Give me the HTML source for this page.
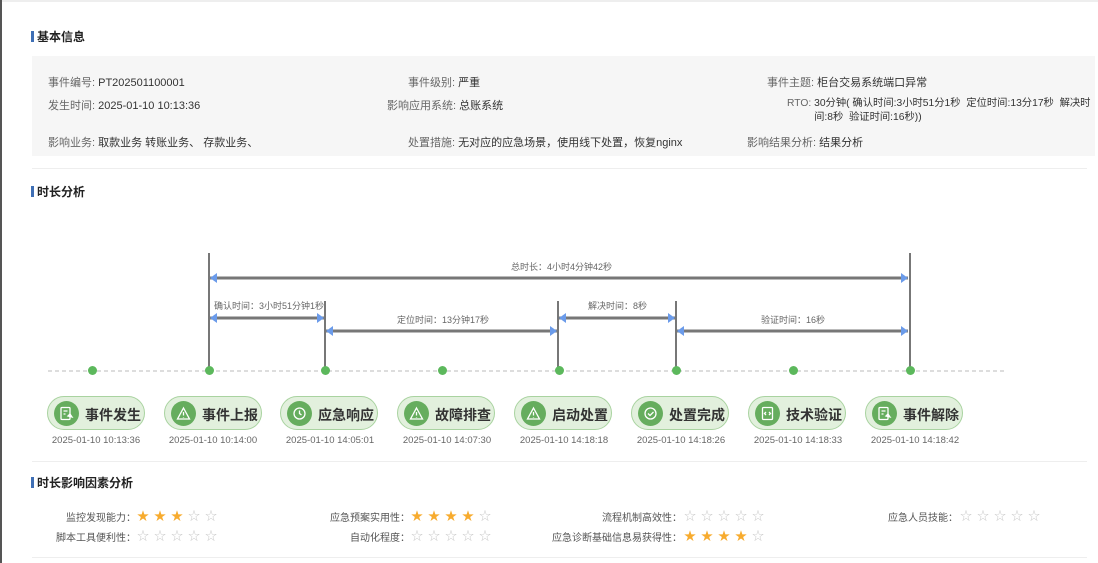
<!DOCTYPE html><html><head><meta charset="utf-8"><style>
*{margin:0;padding:0;box-sizing:border-box}
body{width:1098px;height:563px;background:#fff;font-family:"Liberation Sans","Noto Sans CJK SC",sans-serif;position:relative;overflow:hidden;color:#333}
.a{position:absolute;white-space:nowrap}
.t{font-size:12px;font-weight:bold;color:#222}
.bar{position:absolute;width:3px;height:11px;background:#3f6fb5}
.f{font-size:11px;color:#333}
.f span{color:#666}
.lab{font-size:9px;color:#666}
.vl{position:absolute;width:2px;background:#777}
.dot{position:absolute;width:9px;height:9px;border-radius:50%;background:#5cb85c;top:366px}
.pill{position:absolute;top:396px;width:98px;height:34px;border-radius:17px;background:#e2f0dd;border:1px solid #a9d3a0}
.pill i{position:absolute;left:6px;top:4px;width:25px;height:25px;border-radius:50%;background:#66ad5e}
.pill i svg{position:absolute;left:5px;top:5px}
.pill b{position:absolute;left:37px;top:8px;font-size:14px;color:#333}
.dt{position:absolute;top:435px;font-size:9.5px;color:#666;width:110px;text-align:center}
.sl{font-size:10px;color:#555;text-align:right}
.st{font-size:12px;letter-spacing:5px;color:#c8c8c8}
.st em{font-style:normal;color:#f7ab2e}
</style></head><body>
<div class="a" style="left:0;top:0;width:2px;height:563px;background:#555"></div>
<div class="a" style="left:2px;top:0;width:1096px;height:2px;background:#eee"></div>

<div class="bar" style="left:31px;top:31px"></div><div class="a t" style="left:37px;top:28px">基本信息</div>
<div class="a" style="left:32px;top:56px;width:1063px;height:100px;background:#f6f6f6"></div>
<div class="a f" style="left:48px;top:74px"><span>事件编号: </span>PT202501100001</div>
<div class="a f" style="left:48px;top:97px"><span>发生时间: </span>2025-01-10 10:13:36</div>
<div class="a f" style="left:48px;top:134px"><span>影响业务: </span>取款业务 转账业务、 存款业务、</div>
<div class="a f" style="left:408px;top:74px"><span>事件级别: </span>严重</div>
<div class="a f" style="left:387px;top:97px"><span>影响应用系统: </span>总账系统</div>
<div class="a f" style="left:408px;top:134px"><span>处置措施: </span>无对应的应急场景，使用线下处置，恢复nginx</div>
<div class="a f" style="left:767px;top:74px"><span>事件主题: </span>柜台交易系统端口异常</div>
<div class="a f" style="left:787px;top:97px;line-height:14px;font-size:10.3px"><span>RTO: </span>30分钟( 确认时间:3小时51分1秒 &nbsp;定位时间:13分17秒 &nbsp;解决时<br><span style="visibility:hidden">RTO: </span>间:8秒 &nbsp;验证时间:16秒))</div>
<div class="a f" style="left:747px;top:134px"><span>影响结果分析: </span>结果分析</div>
<div class="a" style="left:32px;top:168px;width:1055px;height:1px;background:#eee"></div>

<div class="bar" style="left:31px;top:186px"></div><div class="a t" style="left:37px;top:183px">时长分析</div>

<div class="vl" style="left:208px;top:253px;height:117px"></div>
<div class="vl" style="left:324px;top:301px;height:69px"></div>
<div class="vl" style="left:557px;top:301px;height:69px"></div>
<div class="vl" style="left:675px;top:301px;height:69px"></div>
<div class="vl" style="left:909px;top:253px;height:117px"></div>
<svg class="a" style="left:0;top:0" width="1098" height="400">
<g fill="#6b9bea">
<line x1="210" y1="278" x2="908" y2="278" stroke="#777" stroke-width="3"/>
<polygon points="210,278 217,273 217,283"/><polygon points="908,278 901,273 901,283"/>
<line x1="210" y1="318" x2="324" y2="318" stroke="#777" stroke-width="3"/>
<polygon points="210,318 217,313 217,323"/><polygon points="324,318 317,313 317,323"/>
<line x1="326" y1="331" x2="557" y2="331" stroke="#777" stroke-width="3"/>
<polygon points="326,331 333,326 333,336"/><polygon points="557,331 550,326 550,336"/>
<line x1="559" y1="318" x2="675" y2="318" stroke="#777" stroke-width="3"/>
<polygon points="559,318 566,313 566,323"/><polygon points="675,318 668,313 668,323"/>
<line x1="677" y1="331" x2="908" y2="331" stroke="#777" stroke-width="3"/>
<polygon points="677,331 684,326 684,336"/><polygon points="908,331 901,326 901,336"/>
</g>
<line x1="48" y1="371" x2="1005" y2="371" stroke="#bbb" stroke-dasharray="4,3"/>
</svg>
<div class="a lab" style="left:511px;top:260px">总时长：4小时4分钟42秒</div>
<div class="a lab" style="left:214px;top:299px">确认时间：3小时51分钟1秒</div>
<div class="a lab" style="left:397px;top:313px">定位时间：13分钟17秒</div>
<div class="a lab" style="left:588px;top:299px">解决时间：8秒</div>
<div class="a lab" style="left:761px;top:313px">验证时间：16秒</div>

<div class="dot" style="left:88px"></div><div class="dot" style="left:205px"></div><div class="dot" style="left:321px"></div><div class="dot" style="left:438px"></div><div class="dot" style="left:555px"></div><div class="dot" style="left:672px"></div><div class="dot" style="left:789px"></div><div class="dot" style="left:906px"></div>

<div class="pill" style="left:47px"><i><svg width="15" height="15" viewBox="0 0 15 15" fill="none" stroke="#fff" stroke-width="1.3"><rect x="2" y="1.5" width="9" height="12" rx="1"/><path d="M4.5 5h4M4.5 8h2"/><path d="M9 10l2-2 2 3z"/></svg></i><b>事件发生</b></div>
<div class="pill" style="left:164px"><i><svg width="15" height="15" viewBox="0 0 15 15" fill="none" stroke="#fff" stroke-width="1.3"><path d="M7.5 2L13.5 13H1.5z"/><path d="M7.5 6v3.5M7.5 11v.5"/></svg></i><b>事件上报</b></div>
<div class="pill" style="left:280px"><i><svg width="15" height="15" viewBox="0 0 15 15" fill="none" stroke="#fff" stroke-width="1.3"><circle cx="7.5" cy="7.5" r="5.5"/><path d="M7.5 4.5v3l2 1.5"/></svg></i><b>应急响应</b></div>
<div class="pill" style="left:397px"><i><svg width="15" height="15" viewBox="0 0 15 15" fill="none" stroke="#fff" stroke-width="1.3"><path d="M7.5 2L13.5 13H1.5z"/><path d="M7.5 6v3.5M7.5 11v.5"/></svg></i><b>故障排查</b></div>
<div class="pill" style="left:514px"><i><svg width="15" height="15" viewBox="0 0 15 15" fill="none" stroke="#fff" stroke-width="1.3"><path d="M7.5 2L13.5 13H1.5z"/><path d="M7.5 6v3.5M7.5 11v.5"/></svg></i><b>启动处置</b></div>
<div class="pill" style="left:631px"><i><svg width="15" height="15" viewBox="0 0 15 15" fill="none" stroke="#fff" stroke-width="1.3"><circle cx="7.5" cy="7.5" r="5.5"/><path d="M5 7.5l2 2 3.5-3.5"/></svg></i><b>处置完成</b></div>
<div class="pill" style="left:748px"><i><svg width="15" height="15" viewBox="0 0 15 15" fill="none" stroke="#fff" stroke-width="1.3"><rect x="2.5" y="1.5" width="10" height="12" rx="1"/><path d="M6 6l-1.5 1.5L6 9M9 6l1.5 1.5L9 9"/></svg></i><b>技术验证</b></div>
<div class="pill" style="left:865px"><i><svg width="15" height="15" viewBox="0 0 15 15" fill="none" stroke="#fff" stroke-width="1.3"><rect x="2" y="1.5" width="9" height="12" rx="1"/><path d="M4.5 5h4M4.5 8h2"/><path d="M9 10l2-2 2 3z"/></svg></i><b>事件解除</b></div>

<div class="dt" style="left:41px">2025-01-10 10:13:36</div>
<div class="dt" style="left:158px">2025-01-10 10:14:00</div>
<div class="dt" style="left:275px">2025-01-10 14:05:01</div>
<div class="dt" style="left:392px">2025-01-10 14:07:30</div>
<div class="dt" style="left:509px">2025-01-10 14:18:18</div>
<div class="dt" style="left:626px">2025-01-10 14:18:26</div>
<div class="dt" style="left:743px">2025-01-10 14:18:33</div>
<div class="dt" style="left:860px">2025-01-10 14:18:42</div>

<div class="a" style="left:32px;top:461px;width:1055px;height:1px;background:#eee"></div>
<div class="bar" style="left:31px;top:477px"></div><div class="a t" style="left:37px;top:474px">时长影响因素分析</div>

<div class="a sl" style="left:20px;top:509px;width:116px">监控发现能力：</div><div class="a st" style="left:137px;top:507px"><em>★★★</em>☆☆</div>
<div class="a sl" style="left:20px;top:529px;width:116px">脚本工具便利性：</div><div class="a st" style="left:137px;top:527px">☆☆☆☆☆</div>
<div class="a sl" style="left:290px;top:509px;width:120px">应急预案实用性：</div><div class="a st" style="left:411px;top:507px"><em>★★★★</em>☆</div>
<div class="a sl" style="left:290px;top:529px;width:120px">自动化程度：</div><div class="a st" style="left:411px;top:527px">☆☆☆☆☆</div>
<div class="a sl" style="left:540px;top:509px;width:142px">流程机制高效性：</div><div class="a st" style="left:684px;top:507px">☆☆☆☆☆</div>
<div class="a sl" style="left:540px;top:529px;width:142px">应急诊断基础信息易获得性：</div><div class="a st" style="left:684px;top:527px"><em>★★★★</em>☆</div>
<div class="a sl" style="left:840px;top:509px;width:118px">应急人员技能：</div><div class="a st" style="left:960px;top:507px">☆☆☆☆☆</div>
<div class="a" style="left:32px;top:557px;width:1055px;height:1px;background:#eee"></div>
</body></html>
